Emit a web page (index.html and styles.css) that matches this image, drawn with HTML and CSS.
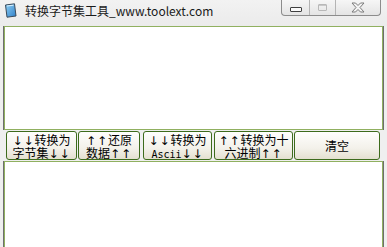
FILE: index.html
```html
<!DOCTYPE html>
<html>
<head>
<meta charset="utf-8">
<link rel="stylesheet" href="styles.css">
</head>
<body>
<div class="window">
  <div class="titlebar">
    <svg class="app-icon" width="13" height="15" viewBox="0 0 13 15">
      <defs>
        <linearGradient id="ig" x1="0" y1="0" x2="1" y2="1">
          <stop offset="0" stop-color="#8fd0f5"/>
          <stop offset="1" stop-color="#2f7fc8"/>
        </linearGradient>
      </defs>
      <path d="M1.5 2 L10.5 0.8 L12 13 L3 14.2 Z" fill="url(#ig)" stroke="#3a4a5a" stroke-width="1"/>
      <path d="M3 3 L9.5 2.2" stroke="#d8f0ff" stroke-width="1"/>
    </svg>
    <span class="title">转换字节集工具_www.toolext.com</span>
    <div class="caption">
      <div class="cap cap-min"><span class="min-glyph"></span></div>
      <div class="cap cap-max"><span class="max-glyph"></span></div>
      <div class="cap cap-close">
        <svg width="14" height="11" viewBox="0 0 14 11">
          <path d="M1 1 H4.5 L7 3.5 L9.5 1 H13 L9 5.5 L13 10 H9.5 L7 7.5 L4.5 10 H1 L5 5.5 Z" fill="#f4f4f4" stroke="#7a7a7a" stroke-width="1" stroke-linejoin="round"/>
        </svg>
      </div>
    </div>
  </div>
  <div class="box box-top"><div class="field"></div></div>
  <div class="buttons">
    <div class="btn b1"><span class="line"><span class="arr">↓↓</span>转换为</span><span class="line">字节集<span class="arr">↓↓</span></span></div>
    <div class="btn b2"><span class="line"><span class="arr">↑↑</span>还原</span><span class="line">数据<span class="arr">↑↑</span></span></div>
    <div class="btn b3"><span class="line"><span class="arr">↓↓</span>转换为</span><span class="line"><span class="mono">Ascii</span><span class="arr">↓↓</span></span></div>
    <div class="btn b4"><span class="line"><span class="arr">↑↑</span>转换为十</span><span class="line">六进制<span class="arr">↑↑</span></span></div>
    <div class="btn b5"><span class="line">清空</span></div>
  </div>
  <div class="box box-bottom"><div class="field"></div></div>
</div>
</body>
</html>
```

FILE: styles.css
```css
html, body {
  margin: 0;
  padding: 0;
  width: 387px;
  height: 247px;
  overflow: hidden;
  background: #efefef;
}
.window {
  display: flex;
  flex-direction: column;
  width: 387px;
  height: 247px;
  overflow: hidden;
  background: #efefef;
}
.titlebar {
  height: 26px;
  display: flex;
  align-items: flex-start;
  background: linear-gradient(#f2f2f2, #ebebeb);
  flex: none;
}
.app-icon {
  margin: 3px 0 0 4px;
  flex: none;
}
.title {
  margin: 3px 0 0 8px;
  font-family: "Noto Sans CJK SC", "Noto Sans", sans-serif;
  font-size: 12px;
  line-height: 16px;
  color: #1a1a1a;
  white-space: nowrap;
}
.caption {
  margin-left: auto;
  margin-right: 6px;
  display: flex;
  height: 15px;
  border: 1px solid #8c8c8c;
  border-top: none;
  border-radius: 0 0 4px 4px;
  background: linear-gradient(#f6f6f6, #e4e4e4);
  overflow: hidden;
}
.cap {
  display: flex;
  align-items: center;
  justify-content: center;
  height: 15px;
}
.cap-min {
  width: 27px;
  border-right: 1px solid #b4b4b4;
}
.cap-max {
  width: 25px;
  border-right: 1px solid #b4b4b4;
}
.cap-close {
  width: 44px;
}
.min-glyph {
  width: 10px;
  height: 3px;
  border: 1px solid #404040;
  border-radius: 1px;
  background: #fafafa;
  margin-top: 3px;
}
.max-glyph {
  width: 7px;
  height: 5px;
  border: 1px solid #b8b8b8;
  border-radius: 1px;
  box-shadow: inset 0 1px 0 #c8c8c8;
}
.box {
  margin-left: 3px;
  width: 379px;
  border-left: 1px solid #6e6e6e;
  border-right: 1px solid #6e6e6e;
  display: flex;
  flex: none;
}
.field {
  flex: 1;
  background: #ffffff;
  border: 1px solid #90b060;
}
.box-top {
  height: 104px;
}
.box-bottom {
  height: 120px;
}
.buttons {
  display: flex;
  height: 31px;
  box-sizing: border-box;
  padding: 1px 0 0 6px;
  flex: none;
}
.btn {
  height: 29px;
  box-sizing: border-box;
  border: 1px solid #3d6b1c;
  border-radius: 3px;
  background: linear-gradient(#fefefd, #f3f1ea 60%, #e4e0d0);
  font-family: "Noto Sans CJK SC", "Noto Sans", sans-serif;
  font-size: 12px;
  color: #000;
  display: flex;
  flex-direction: column;
  align-items: center;
  justify-content: center;
  white-space: nowrap;
}
.line {
  display: block;
  height: 13px;
  line-height: 13px;
}
.arr {
  font-family: "DejaVu Sans", sans-serif;
  font-size: 12px;
  letter-spacing: 1px;
  color: #000;
}
.mono {
  font-family: "DejaVu Sans Mono", monospace;
  font-size: 10px;
}
.b1 { width: 71px; margin-right: 1px; }
.b2 { width: 62px; margin-right: 3px; }
.b3 { width: 69px; margin-right: 2px; }
.b4 { width: 79px; margin-right: 1px; }
.b5 { width: 86px; }
```
